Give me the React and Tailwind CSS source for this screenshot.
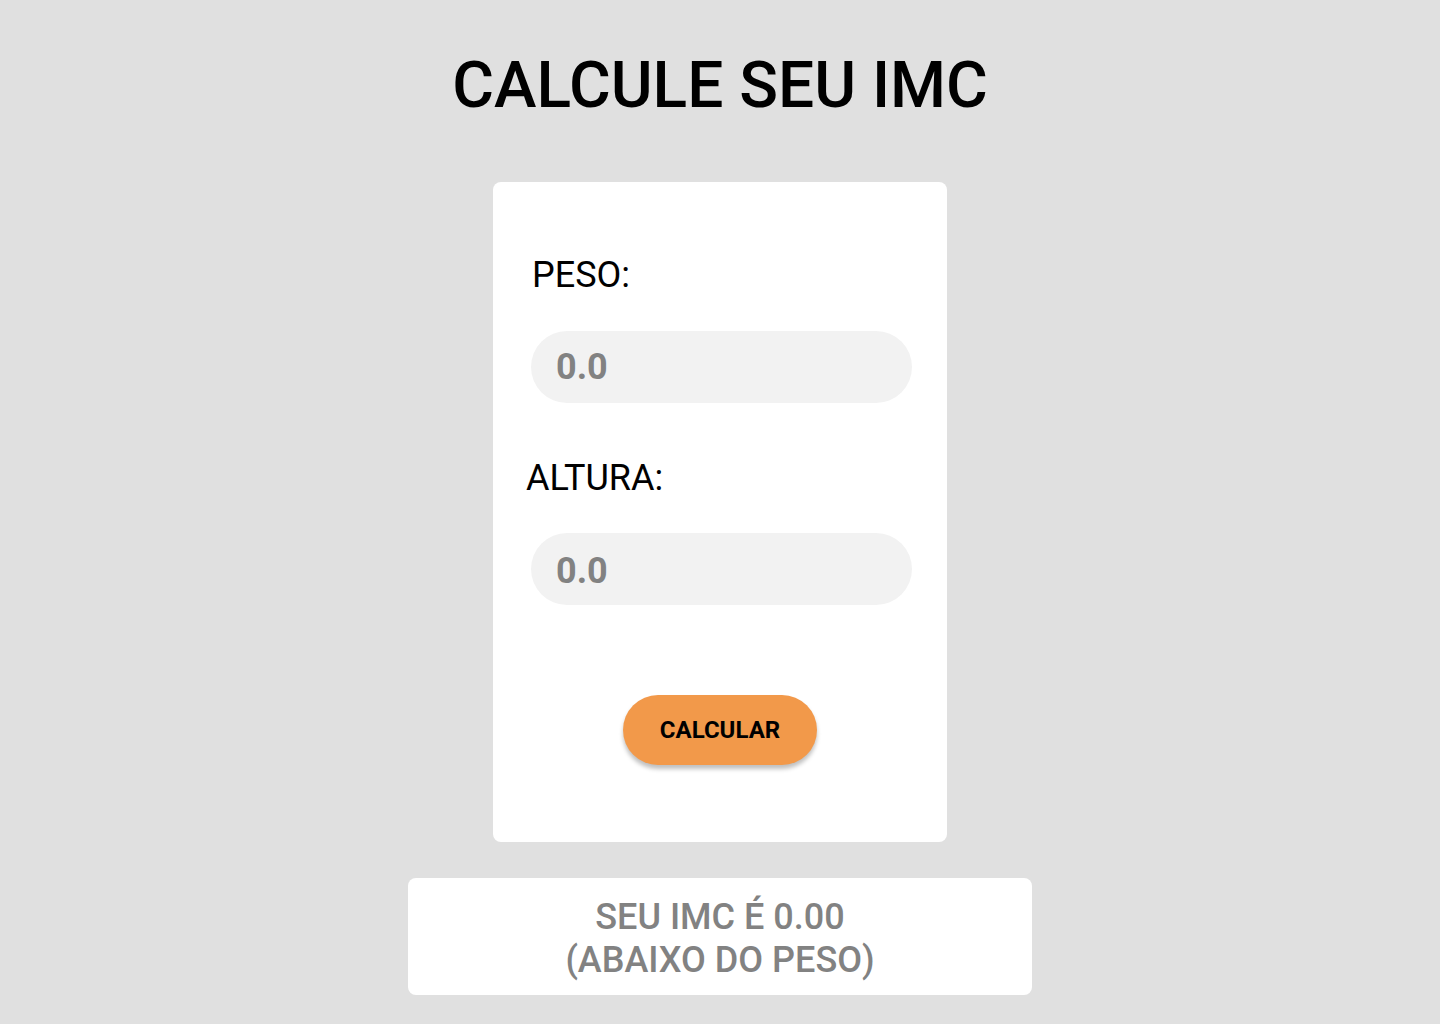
import React, { useState } from "react";

export default function App() {
  const [peso, setPeso] = useState("");
  const [altura, setAltura] = useState("");
  const [imc, setImc] = useState(0);

  function calcular() {
    const p = parseFloat(peso) || 0;
    const a = parseFloat(altura) || 0;
    setImc(a > 0 ? p / (a * a) : 0);
  }

  let faixa = "ABAIXO DO PESO";
  if (imc >= 18.5 && imc < 25) faixa = "PESO NORMAL";
  else if (imc >= 25 && imc < 30) faixa = "SOBREPESO";
  else if (imc >= 30) faixa = "OBESIDADE";

  return (
    <div
      className="min-h-screen bg-[#e0e0e0] flex flex-col items-center"
      style={{ fontFamily: "Roboto, 'Liberation Sans', sans-serif" }}
    >
      <h1 className="mt-[54px] text-[64px] leading-none font-medium text-black">
        CALCULE SEU IMC
      </h1>

      <div className="mt-[64px] w-[454px] h-[660px] bg-white rounded-lg flex flex-col pt-[75px]">
        <label className="ml-[39px] text-[36px] leading-none text-black">PESO:</label>
        <input
          value={peso}
          onChange={(e) => setPeso(e.target.value)}
          placeholder="0.0"
          className="mt-[38px] ml-[38px] w-[381px] h-[72px] rounded-full bg-[#f2f2f2] pl-[25px] text-[36px] font-bold text-[#828282] placeholder:text-[#828282] outline-none"
        />

        <label className="mt-[57px] ml-[33px] text-[36px] leading-none text-black">ALTURA:</label>
        <input
          value={altura}
          onChange={(e) => setAltura(e.target.value)}
          placeholder="0.0"
          className="mt-[37px] ml-[38px] w-[381px] h-[72px] rounded-full bg-[#f2f2f2] pl-[25px] pt-[3px] text-[36px] font-bold text-[#828282] placeholder:text-[#828282] outline-none"
        />

        <button
          onClick={calcular}
          className="mt-[90px] self-center w-[194px] h-[70px] rounded-full bg-[#f2994a] text-[24px] font-bold text-black shadow-[0_4px_4px_rgba(0,0,0,0.25)]"
        >
          CALCULAR
        </button>
      </div>

      <div className="mt-[36px] w-[624px] h-[117px] bg-white rounded-lg pt-[18px] text-center text-[36px] font-medium leading-[43px] text-[#828282]">
        <p>SEU IMC É {imc.toFixed(2)}</p>
        <p>({faixa})</p>
      </div>
    </div>
  );
}
